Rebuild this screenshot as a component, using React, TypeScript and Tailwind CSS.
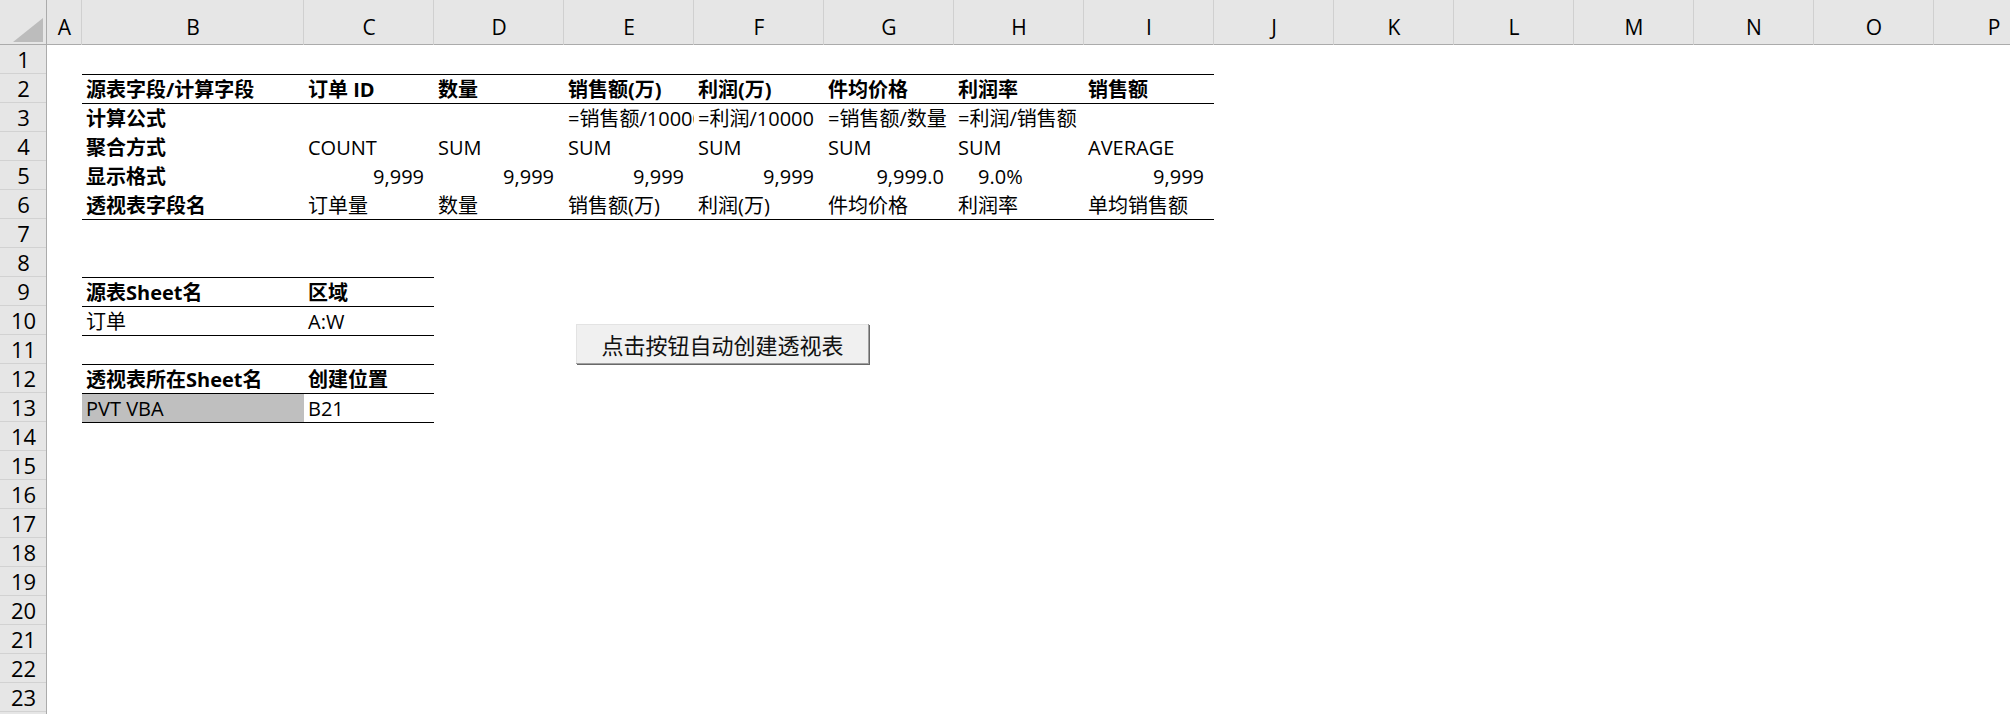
import React from 'react';

const COLS = ['A', 'B', 'C', 'D', 'E', 'F', 'G', 'H', 'I', 'J', 'K', 'L', 'M', 'N', 'O', 'P'];

type Cell = { t: string; b?: boolean; al?: 'r' | 'p'; bg?: boolean } | null;

const data: Record<number, Cell[]> = {
  2: [
    { t: '源表字段/计算字段', b: true },
    { t: '订单 ID', b: true },
    { t: '数量', b: true },
    { t: '销售额(万)', b: true },
    { t: '利润(万)', b: true },
    { t: '件均价格', b: true },
    { t: '利润率', b: true },
    { t: '销售额', b: true },
  ],
  3: [
    { t: '计算公式', b: true },
    null,
    null,
    { t: '=销售额/10000' },
    { t: '=利润/10000' },
    { t: '=销售额/数量' },
    { t: '=利润/销售额' },
    null,
  ],
  4: [
    { t: '聚合方式', b: true },
    { t: 'COUNT' },
    { t: 'SUM' },
    { t: 'SUM' },
    { t: 'SUM' },
    { t: 'SUM' },
    { t: 'SUM' },
    { t: 'AVERAGE' },
  ],
  5: [
    { t: '显示格式', b: true },
    { t: '9,999', al: 'r' },
    { t: '9,999', al: 'r' },
    { t: '9,999', al: 'r' },
    { t: '9,999', al: 'r' },
    { t: '9,999.0', al: 'r' },
    { t: '9.0%', al: 'p' },
    { t: '9,999', al: 'r' },
  ],
  6: [
    { t: '透视表字段名', b: true },
    { t: '订单量' },
    { t: '数量' },
    { t: '销售额(万)' },
    { t: '利润(万)' },
    { t: '件均价格' },
    { t: '利润率' },
    { t: '单均销售额' },
  ],
  9: [{ t: '源表Sheet名', b: true }, { t: '区域', b: true }],
  10: [{ t: '订单' }, { t: 'A:W' }],
  12: [{ t: '透视表所在Sheet名', b: true }, { t: '创建位置', b: true }],
  13: [{ t: 'PVT VBA', bg: true }, { t: 'B21' }],
};

const wideTop = new Set([2, 3, 7]);
const narrowTop = new Set([9, 10, 11, 12, 13, 14]);

const ROWS = Array.from({ length: 24 }, (_, i) => i + 1);

export default function App() {
  return (
    <div
      className="relative w-[2010px] h-[714px] overflow-hidden bg-white text-black"
      style={{ fontFamily: '"Open Sans", "Noto Sans CJK SC", sans-serif' }}
    >
      <div className="grid w-max grid-cols-[47px_35px_222px_130px_130px_130px_130px_130px_130px_130px_120px_120px_120px_120px_120px_120px_120px] grid-rows-[45px_repeat(24,29px)]">
        {/* corner */}
        <div className="relative h-[45px] bg-[#e6e6e6] shadow-[inset_-1px_0_0_#ababab,inset_0_-1px_0_#ababab]">
          <svg className="absolute left-[13px] top-[18px]" width="30" height="24" viewBox="0 0 30 24">
            <polygon points="30,0 30,24 0,24" fill="#bcbcbc" />
          </svg>
        </div>
        {COLS.map((c) => (
          <div
            key={c}
            className="flex h-[45px] items-end justify-center bg-[#e6e6e6] pb-[3px] text-[21px] leading-[29px] shadow-[inset_-1px_0_0_#d0d0d0,inset_0_-1px_0_#ababab]"
          >
            {c}
          </div>
        ))}
        {ROWS.map((r) => {
          const cells = data[r] || [];
          return (
            <React.Fragment key={r}>
              <div className="h-[29px] bg-[#e6e6e6] text-center text-[22px] leading-[29px] shadow-[inset_-1px_0_0_#ababab,inset_0_-1px_0_#d2d2d2]">
                {r}
              </div>
              {COLS.map((c, ci) => {
                const di = ci - 1;
                const cell = di >= 0 && di < 8 ? cells[di] ?? null : null;
                const top =
                  (wideTop.has(r) && di >= 0 && di < 8) || (narrowTop.has(r) && di >= 0 && di < 2);
                const cls = [
                  'h-[29px] overflow-hidden whitespace-nowrap text-[20px] leading-[29px]',
                  top ? 'shadow-[inset_0_1px_0_#000]' : '',
                  cell && cell.b ? 'font-bold' : '',
                  cell && cell.al === 'r' ? 'text-right pr-[10px]' : cell && cell.al === 'p' ? 'pl-[24px]' : 'pl-[4px]',
                  cell && cell.bg ? 'bg-[#bfbfbf]' : '',
                ].join(' ');
                return (
                  <div key={c} className={cls}>
                    {cell ? <span className="relative top-[1px]">{cell.t}</span> : null}
                  </div>
                );
              })}
            </React.Fragment>
          );
        })}
      </div>

      <div
        className="absolute left-[576px] top-[324px] flex h-[40px] w-[293px] items-center justify-center bg-[#f0f0f0] text-[22px] text-[#111] shadow-[1px_1px_0_#696969,inset_-1px_-1px_0_#a0a0a0,inset_1px_1px_0_#e3e3e3]"
        style={{ fontFamily: '"Noto Sans CJK SC", sans-serif' }}
      >
        点击按钮自动创建透视表
      </div>
    </div>
  );
}
